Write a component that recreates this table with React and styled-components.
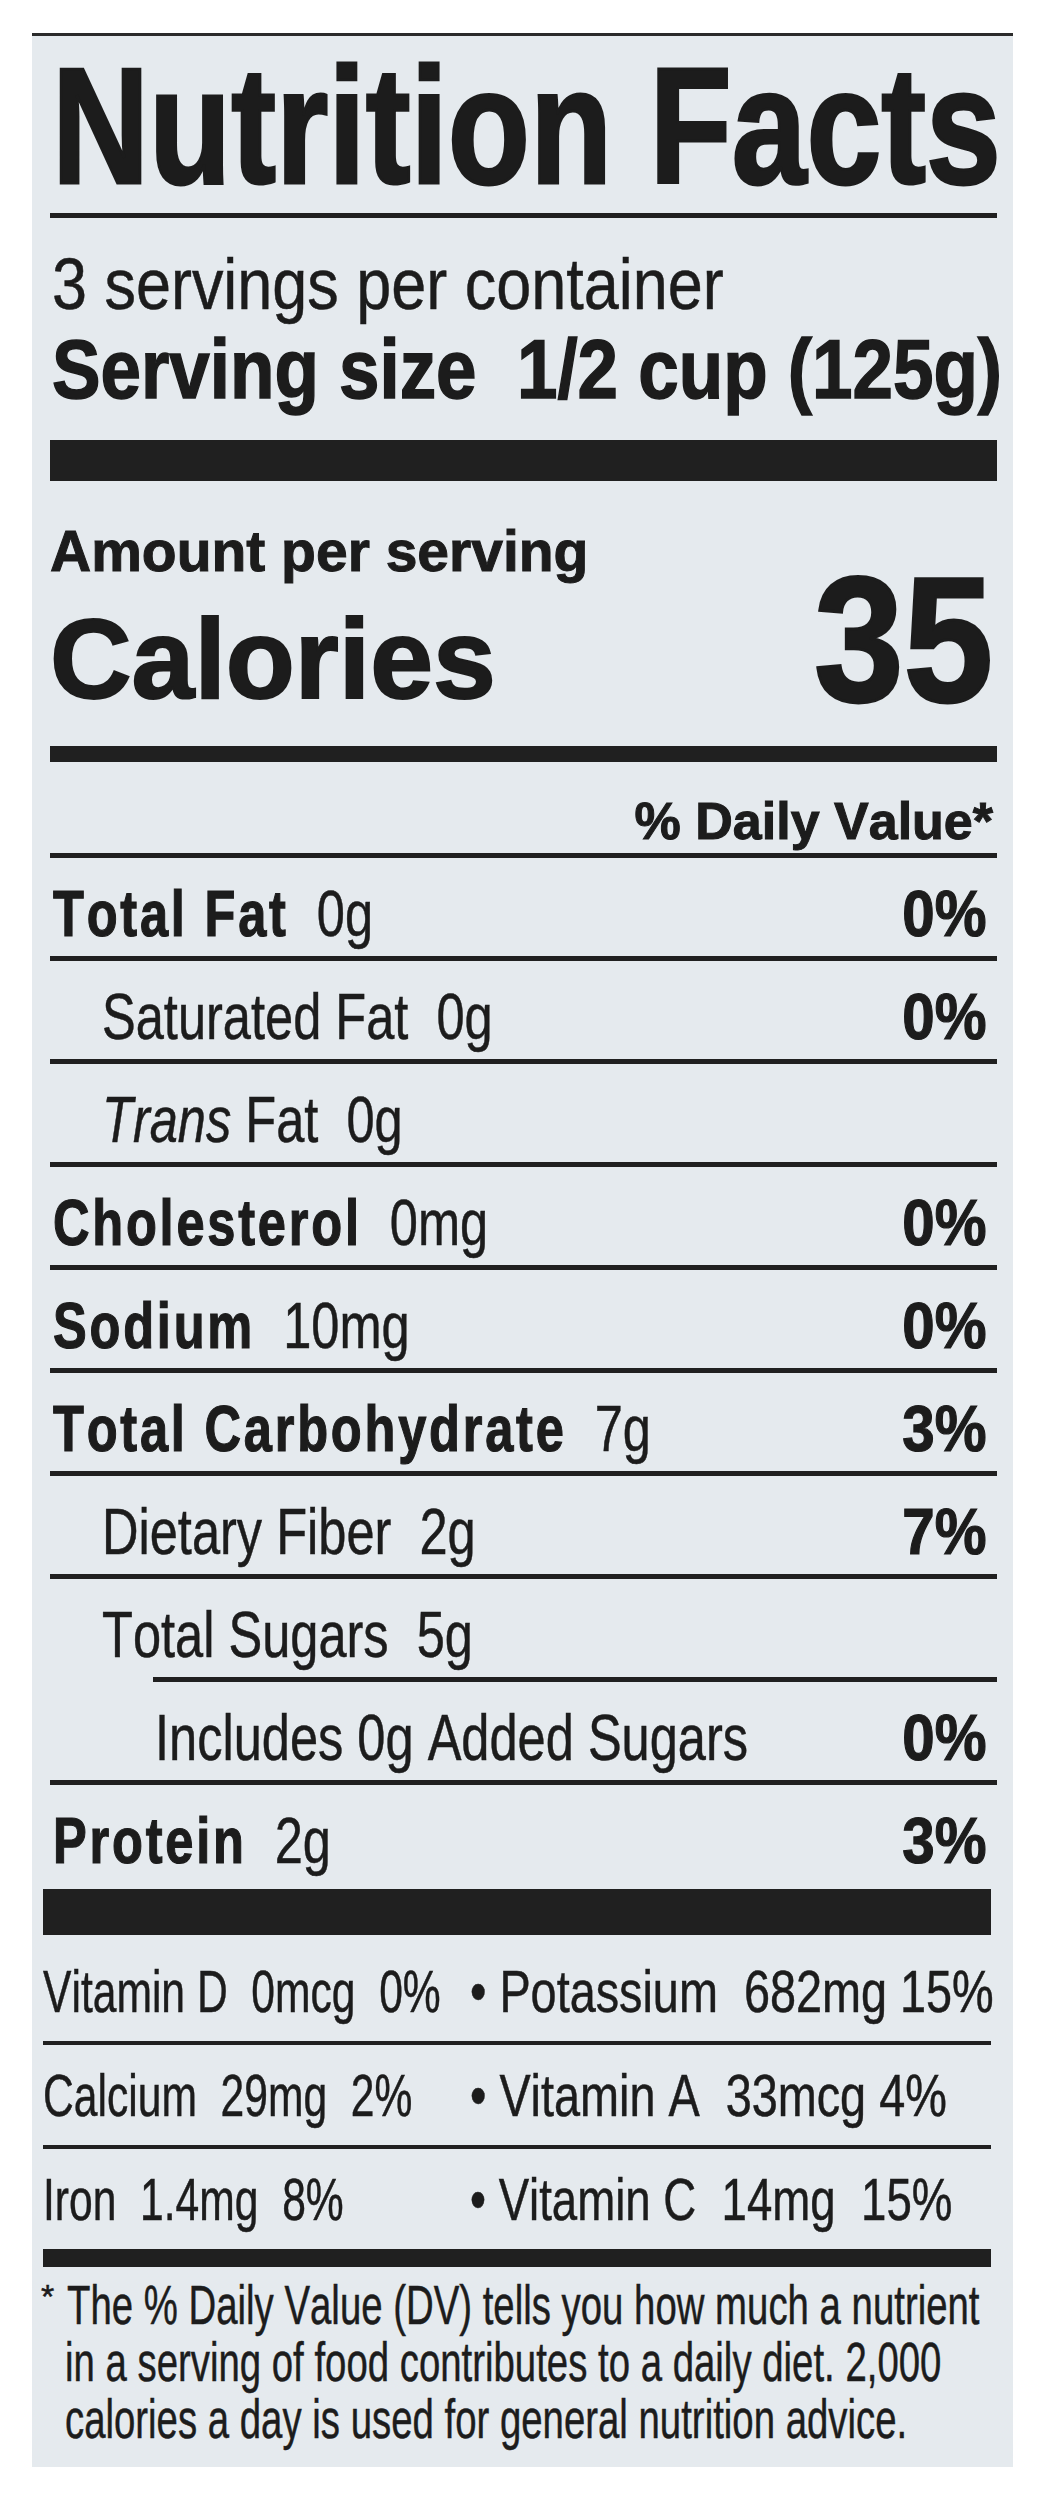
import React from "react";
import styled, { createGlobalStyle } from "styled-components";

const FONT = `"Liberation Sans", Arial, Helvetica, sans-serif`;
const INK = "#1c1c1c";

const GlobalStyle = createGlobalStyle`
  html, body { margin: 0; padding: 0; background: #ffffff; }
  body { font-family: ${FONT}; color: ${INK}; }
  * { box-sizing: border-box; }
`;

const Page = styled.main`
  width: 1048px;
  min-height: 2500px;
  padding-top: 33px;
  background: #ffffff;
`;

const Label = styled.section`
  margin-left: 32px;
  width: 981px;
  background: #e5eaee;
  border-top: 3px solid #2b2b2b;
  padding: 0 16px 20px 18px;
  color: ${INK};
  font-family: ${FONT};
  font-kerning: none;
  -webkit-text-stroke: 0.5px ${INK};
`;

const Title = styled.h1`
  margin: 10px 0 0 2px;
  font-size: 165px;
  line-height: 160px;
  font-weight: 700;
  white-space: nowrap;
  -webkit-text-stroke: 3px ${INK};
  transform: scaleX(0.815);
  transform-origin: left center;
`;

const Bar = styled.div`
  height: ${(p) => p.$h}px;
  margin-top: ${(p) => p.$mt || 0}px;
  margin-left: ${(p) => p.$indent || 0}px;
  background: #202020;
`;

const Servings = styled.p`
  margin: 30px 0 0 2px;
  font-size: 72px;
  line-height: 72px;
  font-weight: 400;
  white-space: pre;
  transform: scaleX(0.874);
  transform-origin: left center;
`;

const ServingSize = styled.p`
  margin: 7px 0 0 2px;
  font-size: 84px;
  line-height: 84px;
  font-weight: 700;
  white-space: pre;
  -webkit-text-stroke: 1.5px ${INK};
  transform: scaleX(0.866);
  transform-origin: left center;
`;

const CalorieBlock = styled.div`
  display: flex;
  justify-content: space-between;
  align-items: flex-end;
`;

const CalorieText = styled.div`
  display: flex;
  flex-direction: column;
`;

const AmountLabel = styled.div`
  margin-top: 42px;
  font-size: 57px;
  line-height: 57px;
  font-weight: 700;
  white-space: nowrap;
  -webkit-text-stroke: 1px ${INK};
`;

const CaloriesLabel = styled.div`
  margin-top: 24px;
  font-size: 113px;
  line-height: 110px;
  font-weight: 700;
  white-space: nowrap;
  -webkit-text-stroke: 2px ${INK};
`;

const CaloriesValue = styled.div`
  margin-right: 4px;
  font-size: 179px;
  line-height: 150px;
  font-weight: 700;
  -webkit-text-stroke: 3px ${INK};
  transform: scaleX(0.9);
  transform-origin: right center;
`;

const DVHeader = styled.div`
  margin-top: 33px;
  padding-right: 4px;
  text-align: right;
  font-size: 52px;
  line-height: 52px;
  font-weight: 700;
  -webkit-text-stroke: 1px ${INK};
`;

const INDENTS = [3, 52, 105];

const NutrientRow = styled.div`
  display: flex;
  justify-content: space-between;
  align-items: flex-start;
  height: 98px;
  padding: 24px 11px 0 ${(p) => INDENTS[p.$level || 0]}px;
  font-size: 64px;
  line-height: 64px;
`;

const RowLabel = styled.div`
  flex: 1 1 auto;
  min-width: 0;
  white-space: pre;
  font-weight: 400;
  transform: scaleX(0.79);
  transform-origin: left center;
`;

const Nutrient = styled.span`
  font-weight: 700;
  letter-spacing: 0.055em;
  -webkit-text-stroke: 1.2px ${INK};
`;

const Percent = styled.div`
  flex: 0 0 auto;
  font-weight: 700;
  white-space: nowrap;
  -webkit-text-stroke: 1.2px ${INK};
  transform: scaleX(0.91);
  transform-origin: right center;
`;

const LowerSection = styled.div`
  margin: 0 6px 0 -7px;
`;

const VitaminList = styled.div`
  margin-top: 6px;
`;

const VitaminRow = styled.div`
  display: grid;
  grid-template-columns: 427px 1fr;
  height: 100px;
  padding-top: 21px;
  font-size: 60px;
  line-height: 60px;
`;

const VitaminCell = styled.div`
  white-space: pre;
  transform: scaleX(${(p) => p.$sx || 0.71});
  transform-origin: left center;
`;

const Footnote = styled.div`
  display: flex;
  align-items: flex-start;
  margin-top: 9px;
  margin-left: -2px;
`;

const Asterisk = styled.span`
  flex: 0 0 26px;
  font-size: 34px;
  line-height: 40px;
`;

const FootText = styled.p`
  margin: 0;
  font-size: 56px;
  line-height: 57px;
  white-space: pre;
  transform: scaleX(0.685);
  transform-origin: left top;
`;

const FootLine = styled.span`
  display: block;
  margin-left: ${(p) => p.$shift || 0}px;
`;

const nutrients = [
  { bold: "Total Fat", amount: "0g", pct: "0%", level: 0 },
  { text: "Saturated Fat", amount: "0g", pct: "0%", level: 1 },
  { italic: "Trans", text: " Fat", amount: "0g", level: 1 },
  { bold: "Cholesterol", amount: "0mg", pct: "0%", level: 0 },
  { bold: "Sodium", amount: "10mg", pct: "0%", level: 0 },
  { bold: "Total Carbohydrate", amount: "7g", pct: "3%", level: 0 },
  { text: "Dietary Fiber", amount: "2g", pct: "7%", level: 1 },
  { text: "Total Sugars", amount: "5g", level: 1, ruleIndent: 103 },
  { text: "Includes 0g Added Sugars", level: 2, pct: "0%" },
  { bold: "Protein", amount: "2g", pct: "3%", level: 0, last: true },
];

const vitamins = [
  ["Vitamin D  0mcg  0%", "• Potassium  682mg 15%", 0.78],
  ["Calcium  29mg  2%", "• Vitamin A  33mcg 4%", 0.78],
  ["Iron  1.4mg  8%", "• Vitamin C  14mg  15%", 0.76],
];

export default function App() {
  return (
    <Page>
      <GlobalStyle />
      <Label>
        <Title>Nutrition Facts</Title>
        <Bar $h={5} $mt={7} />
        <Servings>3 servings per container</Servings>
        <ServingSize>{"Serving size  1/2 cup (125g)"}</ServingSize>
        <Bar $h={41} $mt={29} />

        <CalorieBlock>
          <CalorieText>
            <AmountLabel>Amount per serving</AmountLabel>
            <CaloriesLabel>Calories</CaloriesLabel>
          </CalorieText>
          <CaloriesValue>35</CaloriesValue>
        </CalorieBlock>
        <Bar $h={16} $mt={32} />

        <DVHeader>% Daily Value*</DVHeader>
        <Bar $h={5} $mt={6} />

        {nutrients.map((n, i) => (
          <React.Fragment key={i}>
            <NutrientRow $level={n.level}>
              <RowLabel>
                {n.bold && <Nutrient>{n.bold}</Nutrient>}
                {n.italic && <i>{n.italic}</i>}
                {n.text}
                {n.amount ? "  " + n.amount : ""}
              </RowLabel>
              {n.pct && <Percent>{n.pct}</Percent>}
            </NutrientRow>
            {!n.last && <Bar $h={5} $indent={n.ruleIndent} />}
          </React.Fragment>
        ))}

        <LowerSection>
          <Bar $h={46} $mt={6} />
          <VitaminList>
            {vitamins.map((v, i) => (
              <React.Fragment key={i}>
                <VitaminRow>
                  <VitaminCell>{v[0]}</VitaminCell>
                  <VitaminCell $sx={v[2]}>{v[1]}</VitaminCell>
                </VitaminRow>
                {i < vitamins.length - 1 && <Bar $h={4} />}
              </React.Fragment>
            ))}
          </VitaminList>
          <Bar $h={18} />
          <Footnote>
            <Asterisk>*</Asterisk>
            <FootText>
              <FootLine>The % Daily Value (DV) tells you how much a nutrient</FootLine>
              <FootLine $shift={-3}>in a serving of food contributes to a daily diet. 2,000</FootLine>
              <FootLine $shift={-3}>calories a day is used for general nutrition advice.</FootLine>
            </FootText>
          </Footnote>
        </LowerSection>
      </Label>
    </Page>
  );
}
